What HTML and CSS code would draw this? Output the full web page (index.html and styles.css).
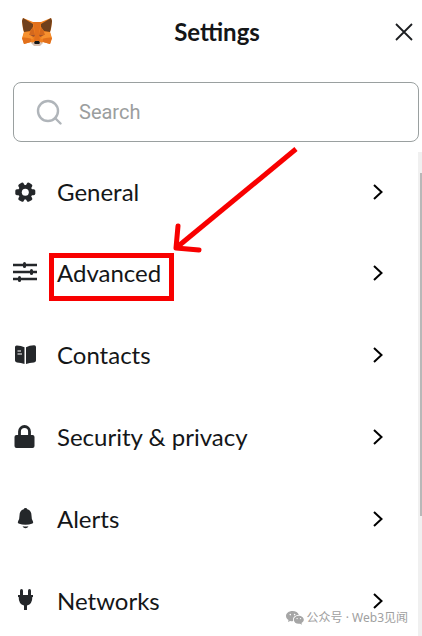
FILE: index.html
```html
<!DOCTYPE html>
<html lang="en">
<head>
    <meta charset="UTF-8">
    <meta name="viewport" content="width=device-width, initial-scale=1.0">
    <title>Settings</title>
    <link rel="stylesheet" href="styles.css">
</head>
<body>
    <header class="header">
        <svg class="logo" viewBox="0 0 32 30" aria-hidden="true">
            <path fill="#f0801f" d="M2 1 L12 5 H20 L30 1 L31 4 L30 12 L29 15 L31 21 L29 27 L22 25 L19 28 H13 L10 25 L3 27 L1 21 L3 15 L2 12 L1 4 Z"/>
            <path fill="#e2701b" d="M1 21 L10 20 L10 25 L3 27 Z M31 21 L22 20 L22 25 L29 27 Z M12 5 H20 L18 16 L19 24 H13 L14 16 Z"/>
            <path fill="#f6912f" d="M3 15 L9 15 L12 22 L2 20 Z M29 15 L23 15 L20 22 L30 20 Z"/>
            <path fill="#70401c" d="M2 1 L12 7 L12 10 L9 14 L3 15 L2 11 L1 4 Z M30 1 L20 7 L20 10 L23 14 L29 15 L30 11 L31 4 Z"/>
            <path fill="#d4681d" d="M12 10 L9 15 L8 18 L14 18 Z M20 10 L23 15 L24 18 L18 18 Z"/>
            <path fill="#a3532a" d="M9 18 L14 18 L13 20 Z M23 18 L18 18 L19 20 Z"/>
            <path fill="#d5bfb2" d="M10 26 L13 25 H19 L22 26 L19 29 H13 Z"/>
            <path fill="#161616" d="M14 24 H18 L19 26 L18 27 H14 L13 26 Z"/>
        </svg>
        <h1 class="title">Settings</h1>
        <button type="button" class="close-btn" aria-label="Close">
            <svg viewBox="0 0 18 18" width="18" height="18" aria-hidden="true">
                <path d="M1 1 L17 17 M17 1 L1 17" fill="none" stroke="#1c1e21" stroke-width="1.8"/>
            </svg>
        </button>
    </header>

    <div class="search-box">
        <label for="search" aria-label="Search settings">
            <svg viewBox="0 0 26 26" width="26" height="26" aria-hidden="true">
                <circle cx="12" cy="12" r="10" fill="none" stroke="#b0b5ba" stroke-width="2.4"/>
                <path d="M19 19 L24.5 24.5" fill="none" stroke="#b0b5ba" stroke-width="2.4" stroke-linecap="round"/>
            </svg>
        </label>
        <input type="text" id="search" class="search-input" placeholder="Search">
    </div>

    <main class="content">
        <nav class="menu">
            <a href="#" class="menu-item">
                <svg class="icon" viewBox="0 0 24 24" aria-hidden="true">
                    <rect x="2.3" y="9.2" width="20" height="6" rx="1.6"/>
                    <rect x="2.3" y="9.2" width="20" height="6" rx="1.6" transform="rotate(60 12.3 12.2)"/>
                    <rect x="2.3" y="9.2" width="20" height="6" rx="1.6" transform="rotate(120 12.3 12.2)"/>
                    <circle cx="12.3" cy="12.2" r="7.3"/>
                    <circle cx="12.3" cy="12.2" r="3.5" fill="#fff"/>
                </svg>
                <span class="label">General</span>
                <svg class="chevron" viewBox="0 0 10 16" aria-hidden="true"><path d="M1 1 L8.5 8 L1 15"/></svg>
            </a>
            <a href="#" class="menu-item">
                <svg class="icon" viewBox="0 0 24 24" aria-hidden="true">
                    <path d="M0 4 H24 M0 11 H24 M0 18 H24" fill="none" stroke="#24272a" stroke-width="2.4"/>
                    <rect x="10" y="1" width="3" height="6" rx="1.5"/>
                    <rect x="17" y="8" width="3" height="6" rx="1.5"/>
                    <rect x="5" y="15" width="3" height="6" rx="1.5"/>
                </svg>
                <span class="label marked">Advanced</span>
                <svg class="chevron" viewBox="0 0 10 16" aria-hidden="true"><path d="M1 1 L8.5 8 L1 15"/></svg>
            </a>
            <a href="#" class="menu-item">
                <svg class="icon" viewBox="0 0 24 24" aria-hidden="true">
                    <path d="M2 4 Q2 2.2 4 2.4 Q8 2.6 11.5 4.2 V21 Q8 19.5 4 19.4 Q2 19.4 2 17.6 Z"/>
                    <path d="M13 4.2 Q16.5 2.4 21 2.3 Q23 2.2 23 4 V17.6 Q23 19.2 21 19.4 Q16.5 19.8 13 21 Z"/>
                    <path d="M4.5 8 H8 M4.5 11 H9" fill="none" stroke="#fff" stroke-width="1.2"/>
                </svg>
                <span class="label">Contacts</span>
                <svg class="chevron" viewBox="0 0 10 16" aria-hidden="true"><path d="M1 1 L8.5 8 L1 15"/></svg>
            </a>
            <a href="#" class="menu-item">
                <svg class="icon" viewBox="0 0 24 24" aria-hidden="true">
                    <path d="M6.5 11 V6.5 A5 5 0 0 1 16.5 6.5 V11" fill="none" stroke="#24272a" stroke-width="2.8"/>
                    <rect x="1.5" y="10" width="20" height="13" rx="2"/>
                </svg>
                <span class="label">Security &amp; privacy</span>
                <svg class="chevron" viewBox="0 0 10 16" aria-hidden="true"><path d="M1 1 L8.5 8 L1 15"/></svg>
            </a>
            <a href="#" class="menu-item">
                <svg class="icon" viewBox="0 0 24 24" aria-hidden="true">
                    <path d="M12.5 1 Q14 1 14.3 2.3 Q18.5 3.5 18.5 8.5 Q18.5 12 19.8 14 Q20.8 15.6 19.5 16.6 Q12.5 19 5.5 16.6 Q4.2 15.6 5.2 14 Q6.5 12 6.5 8.5 Q6.5 3.5 10.7 2.3 Q11 1 12.5 1 Z"/>
                    <path d="M9.5 19.2 Q12.5 20 15.5 19.2 Q14.5 21.2 12.5 21.2 Q10.5 21.2 9.5 19.2 Z"/>
                </svg>
                <span class="label">Alerts</span>
                <svg class="chevron" viewBox="0 0 10 16" aria-hidden="true"><path d="M1 1 L8.5 8 L1 15"/></svg>
            </a>
            <a href="#" class="menu-item">
                <svg class="icon" viewBox="0 0 24 24" aria-hidden="true">
                    <rect x="7" y="0" width="3" height="8" rx="1.5"/>
                    <rect x="15" y="0" width="3" height="8" rx="1.5"/>
                    <path d="M5 6 H20 V8 H19.3 Q19.5 15 14 16.5 V21 H11 V16.5 Q5.500 15 5.700 8 H5 Z"/>
                </svg>
                <span class="label">Networks</span>
                <svg class="chevron" viewBox="0 0 10 16" aria-hidden="true"><path d="M1 1 L8.5 8 L1 15"/></svg>
            </a>
        </nav>
        <div class="scroll-track">
            <div class="scroll-thumb"></div>
        </div>
    </main>

    <svg class="arrow" viewBox="0 0 126 108" aria-hidden="true">
        <path d="M124 4 L4 103" stroke-width="5"/>
        <path d="M6 81 L4 103 L27 105" stroke-width="5" stroke-linecap="round" stroke-linejoin="round"/>
    </svg>

    <div class="watermark">
        <svg viewBox="0 0 18 14" width="18" height="14" aria-hidden="true">
            <path fill="#a6a6a6" d="M6.5 0 C2.8 0 0 2.3 0 5.1 C0 6.8 1 8.2 2.5 9.1 L2 11 L4.2 9.9 Q6 10.4 7.2 10.1 C6.2 6.5 9 4 12.8 4 C12.2 1.6 9.6 0 6.5 0 Z"/>
            <path fill="#a6a6a6" d="M12.7 4.7 C9.8 4.7 7.8 6.5 7.8 8.8 C7.8 11.5 10.7 13.4 14 12.7 L16 13.8 L15.5 12 C17 11.2 17.8 10 17.8 8.8 C17.8 6.5 15.5 4.7 12.7 4.7 Z"/>
            <g fill="#fff">
                <circle cx="4.3" cy="3.6" r="0.8"/>
                <circle cx="8.6" cy="3.6" r="0.8"/>
                <circle cx="11.1" cy="7.6" r="0.7"/>
                <circle cx="14.5" cy="7.6" r="0.7"/>
            </g>
        </svg>
        <span lang="zh">公众号 · Web3见闻</span>
    </div>
</body>
</html>
```

FILE: styles.css
```css
:root {
    --text-color: #141618;
    --icon-color: #24272a;
    --border-color: #9aa0a0;
    --mark-color: #f80000;
}

* {
    margin: 0;
    padding: 0;
    box-sizing: border-box;
}

body {
    background-color: white;
    color: var(--text-color);
    font-family: Lato, 'Liberation Sans', sans-serif;
    height: 100vh;
    display: flex;
    flex-direction: column;
    position: relative;
    overflow: hidden;
}

.header {
    display: grid;
    grid-template-columns: 32px 1fr 32px;
    align-items: center;
    height: 64px;
    padding: 0 9px 0 21px;
}

.logo {
    width: 32px;
    height: 30px;
}

.title {
    font-size: 24px;
    line-height: 32px;
    font-weight: 700;
    text-align: center;
}

.close-btn {
    display: flex;
    align-items: center;
    justify-content: flex-end;
    height: 32px;
    border: none;
    background: none;
    cursor: pointer;
}

.search-box {
    display: flex;
    align-items: center;
    gap: 17px;
    height: 60px;
    margin: 18px 3px 10px 13px;
    padding: 0 22px;
    border: 1px solid var(--border-color);
    border-radius: 8px;
}

.search-box label {
    display: flex;
}

.search-input {
    flex: 1;
    min-width: 0;
    border: none;
    outline: none;
    background: none;
    font-family: Roboto, sans-serif;
    font-size: 20px;
    line-height: 28px;
    color: var(--text-color);
}

.search-input::placeholder {
    color: #9b9e9e;
}

.content {
    display: flex;
    flex: 1;
    min-height: 0;
    overflow: hidden;
}

.menu {
    flex: 1;
}

.menu-item {
    display: flex;
    align-items: center;
    height: 82px;
    padding: 0 35px 0 13px;
    color: var(--text-color);
    text-decoration: none;
}

.menu-item:first-child {
    height: 80px;
}

.icon {
    width: 24px;
    height: 24px;
    margin-right: 20px;
    fill: var(--icon-color);
}

.label {
    flex: 1;
    font-size: 24px;
    line-height: 32px;
}

.marked {
    position: relative;
}

/* red frame round the highlighted entry */
.marked::before {
    content: '';
    position: absolute;
    top: -4px;
    left: -8px;
    width: 125px;
    height: 48px;
    box-sizing: border-box;
    border: 5px solid var(--mark-color);
}

.chevron {
    width: 10px;
    height: 16px;
    fill: none;
    stroke: #000;
    stroke-width: 2;
}

.scroll-track {
    width: 4px;
    padding: 21px 0 0 2px;
    background-color: #f0f0f0;
}

.scroll-thumb {
    height: 74%;
    background-color: #b8b8b8;
}

.arrow {
    position: absolute;
    top: 145px;
    left: 172px;
    width: 126px;
    height: 108px;
    fill: none;
    stroke: var(--mark-color);
}

.watermark {
    position: absolute;
    right: 14px;
    bottom: 8px;
    display: flex;
    align-items: center;
    gap: 3px;
    font-family: 'Noto Sans', 'Noto Sans CJK SC', sans-serif;
    font-size: 12px;
    line-height: 20px;
    color: #a0a0a0;
}
```
